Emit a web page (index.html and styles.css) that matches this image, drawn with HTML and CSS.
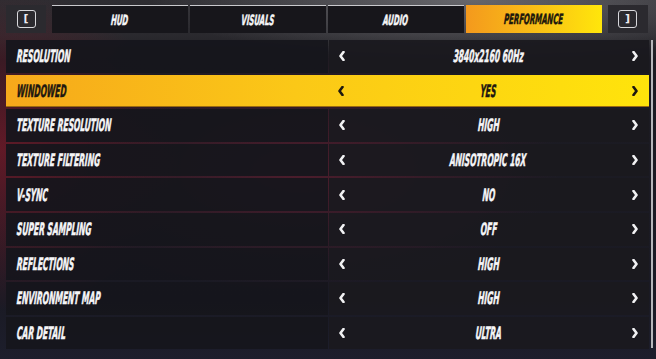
FILE: index.html
```html
<!DOCTYPE html>
<html>
<head>
<meta charset="utf-8">
<link rel="stylesheet" href="styles.css">
</head>
<body>
<div class="screen">
  <div class="top">
    <div class="bump"><span class="key">[</span></div>
    <div class="tabs">
      <div class="tab"><span class="t">HUD</span></div>
      <div class="tab"><span class="t">VISUALS</span></div>
      <div class="tab"><span class="t">AUDIO</span></div>
      <div class="tab active"><span class="t">PERFORMANCE</span></div>
    </div>
    <div class="bump"><span class="key">]</span></div>
  </div>
  <div class="body">
    <div class="list">
      <div class="row"><div class="label"><span class="t">RESOLUTION</span></div><div class="value"><svg class="chev" viewBox="0 0 6 10"><path d="M4.5 1 L1.5 5 L4.5 9"/></svg><span class="t">3840x2160 60Hz</span><svg class="chev" viewBox="0 0 6 10"><path d="M1.5 1 L4.5 5 L1.5 9"/></svg></div></div>
      <div class="row sel"><div class="label"><span class="t">WINDOWED</span></div><div class="value"><svg class="chev" viewBox="0 0 6 10"><path d="M4.5 1 L1.5 5 L4.5 9"/></svg><span class="t">YES</span><svg class="chev" viewBox="0 0 6 10"><path d="M1.5 1 L4.5 5 L1.5 9"/></svg></div></div>
      <div class="row"><div class="label"><span class="t">TEXTURE RESOLUTION</span></div><div class="value"><svg class="chev" viewBox="0 0 6 10"><path d="M4.5 1 L1.5 5 L4.5 9"/></svg><span class="t">HIGH</span><svg class="chev" viewBox="0 0 6 10"><path d="M1.5 1 L4.5 5 L1.5 9"/></svg></div></div>
      <div class="row"><div class="label"><span class="t">TEXTURE FILTERING</span></div><div class="value"><svg class="chev" viewBox="0 0 6 10"><path d="M4.5 1 L1.5 5 L4.5 9"/></svg><span class="t">ANISOTROPIC 16X</span><svg class="chev" viewBox="0 0 6 10"><path d="M1.5 1 L4.5 5 L1.5 9"/></svg></div></div>
      <div class="row"><div class="label"><span class="t">V-SYNC</span></div><div class="value"><svg class="chev" viewBox="0 0 6 10"><path d="M4.5 1 L1.5 5 L4.5 9"/></svg><span class="t">NO</span><svg class="chev" viewBox="0 0 6 10"><path d="M1.5 1 L4.5 5 L1.5 9"/></svg></div></div>
      <div class="row"><div class="label"><span class="t">SUPER SAMPLING</span></div><div class="value"><svg class="chev" viewBox="0 0 6 10"><path d="M4.5 1 L1.5 5 L4.5 9"/></svg><span class="t">OFF</span><svg class="chev" viewBox="0 0 6 10"><path d="M1.5 1 L4.5 5 L1.5 9"/></svg></div></div>
      <div class="row"><div class="label"><span class="t">REFLECTIONS</span></div><div class="value"><svg class="chev" viewBox="0 0 6 10"><path d="M4.5 1 L1.5 5 L4.5 9"/></svg><span class="t">HIGH</span><svg class="chev" viewBox="0 0 6 10"><path d="M1.5 1 L4.5 5 L1.5 9"/></svg></div></div>
      <div class="row"><div class="label"><span class="t">ENVIRONMENT MAP</span></div><div class="value"><svg class="chev" viewBox="0 0 6 10"><path d="M4.5 1 L1.5 5 L4.5 9"/></svg><span class="t">HIGH</span><svg class="chev" viewBox="0 0 6 10"><path d="M1.5 1 L4.5 5 L1.5 9"/></svg></div></div>
      <div class="row"><div class="label"><span class="t">CAR DETAIL</span></div><div class="value"><svg class="chev" viewBox="0 0 6 10"><path d="M4.5 1 L1.5 5 L4.5 9"/></svg><span class="t">ULTRA</span><svg class="chev" viewBox="0 0 6 10"><path d="M1.5 1 L4.5 5 L1.5 9"/></svg></div></div>
    </div>
    <div class="scroll"></div>
  </div>
</div>
</body>
</html>
```
FILE: styles.css
```css
html, body {
  margin: 0;
  padding: 0;
}
body {
  width: 656px;
  height: 359px;
  overflow: hidden;
  background: #16151b;
  font-family: "DejaVu Sans Condensed", "Liberation Sans Narrow", "Liberation Sans", sans-serif;
  font-weight: bold;
  font-style: italic;
  color: #f6f6f8;
}
.screen {
  width: 656px;
  height: 359px;
  box-sizing: border-box;
  padding: 5px 0 0 6px;
  background:
    radial-gradient(ellipse 180px 160px at 0px 150px, rgba(120, 25, 40, 0.75), rgba(120, 25, 40, 0) 100%),
    radial-gradient(ellipse 260px 120px at 300px 170px, rgba(110, 30, 50, 0.6), rgba(110, 30, 50, 0) 100%),
    radial-gradient(ellipse 320px 60px at 470px 0px, rgba(150, 150, 155, 0.55), rgba(150, 150, 155, 0) 100%),
    linear-gradient(180deg, #2e2d32 0px, #2a292e 36px, #1c1b22 60px, #1a1a24 300px, #1d1e2c 359px);
}
.top {
  display: flex;
  height: 28px;
}
.bump {
  width: 40px;
  height: 28px;
  background: #2b2a2f;
  display: flex;
  align-items: center;
  justify-content: center;
}
.key {
  box-sizing: border-box;
  width: 19px;
  height: 18px;
  border: 1.5px solid #d8d8dc;
  border-radius: 3px;
  font-family: "DejaVu Sans", sans-serif;
  font-style: normal;
  font-weight: bold;
  font-size: 11px;
  line-height: 15px;
  text-align: center;
  color: #ececef;
}
.tabs {
  display: flex;
  gap: 2.5px;
  margin: 0 6px;
}
.tab {
  width: 135.5px;
  height: 28px;
  box-sizing: border-box;
  background: #17161b;
  border-top: 1.5px solid #c9c9cd;
  display: flex;
  align-items: center;
  justify-content: center;
}
.tab .t {
  font-size: 14px;
  transform: scaleX(0.55) skewX(-8deg);
}
.tab.active {
  border-top: none;
  background: linear-gradient(90deg, #f4991d 0%, #f9be16 50%, #ffe60b 100%);
  color: #1c170c;
}
.body {
  display: flex;
  margin-top: 7px;
  gap: 2px;
}
.list {
  width: 643px;
  display: flex;
  flex-direction: column;
  gap: 2px;
}
.row {
  height: 32.6px;
  display: flex;
}
.label {
  width: 322px;
  box-sizing: border-box;
  padding-left: 11px;
  display: flex;
  align-items: center;
  background: rgba(22, 21, 28, 0.93);
}
.value {
  flex: 1;
  margin-left: 1px;
  box-sizing: border-box;
  padding: 0 11px 0 10px;
  display: flex;
  align-items: center;
  justify-content: space-between;
  background: rgba(26, 25, 31, 0.95);
}
.t {
  font-size: 17px;
  display: inline-block;
  transform: scaleX(0.49) skewX(-8deg);
  white-space: nowrap;
  -webkit-text-stroke: 0.5px currentColor;
}
.label .t {
  transform-origin: left center;
}
.chev {
  width: 6px;
  height: 10px;
  fill: none;
  stroke: #f1f1f3;
  stroke-width: 2.6;
  stroke-linecap: round;
  stroke-linejoin: round;
}
.row.sel .label,
.row.sel .value {
  background: transparent;
  margin-left: 0;
}
.row.sel {
  background: linear-gradient(90deg, #f6a81b 0%, #fbc817 45%, #ffe40b 100%);
  box-shadow: inset 0 -1px 0 #9a6a10;
  color: #1d1810;
}
.row.sel .chev {
  stroke: #1d1810;
}
.scroll {
  width: 2px;
  height: 308px;
  background: #b6b6ba;
}
```
